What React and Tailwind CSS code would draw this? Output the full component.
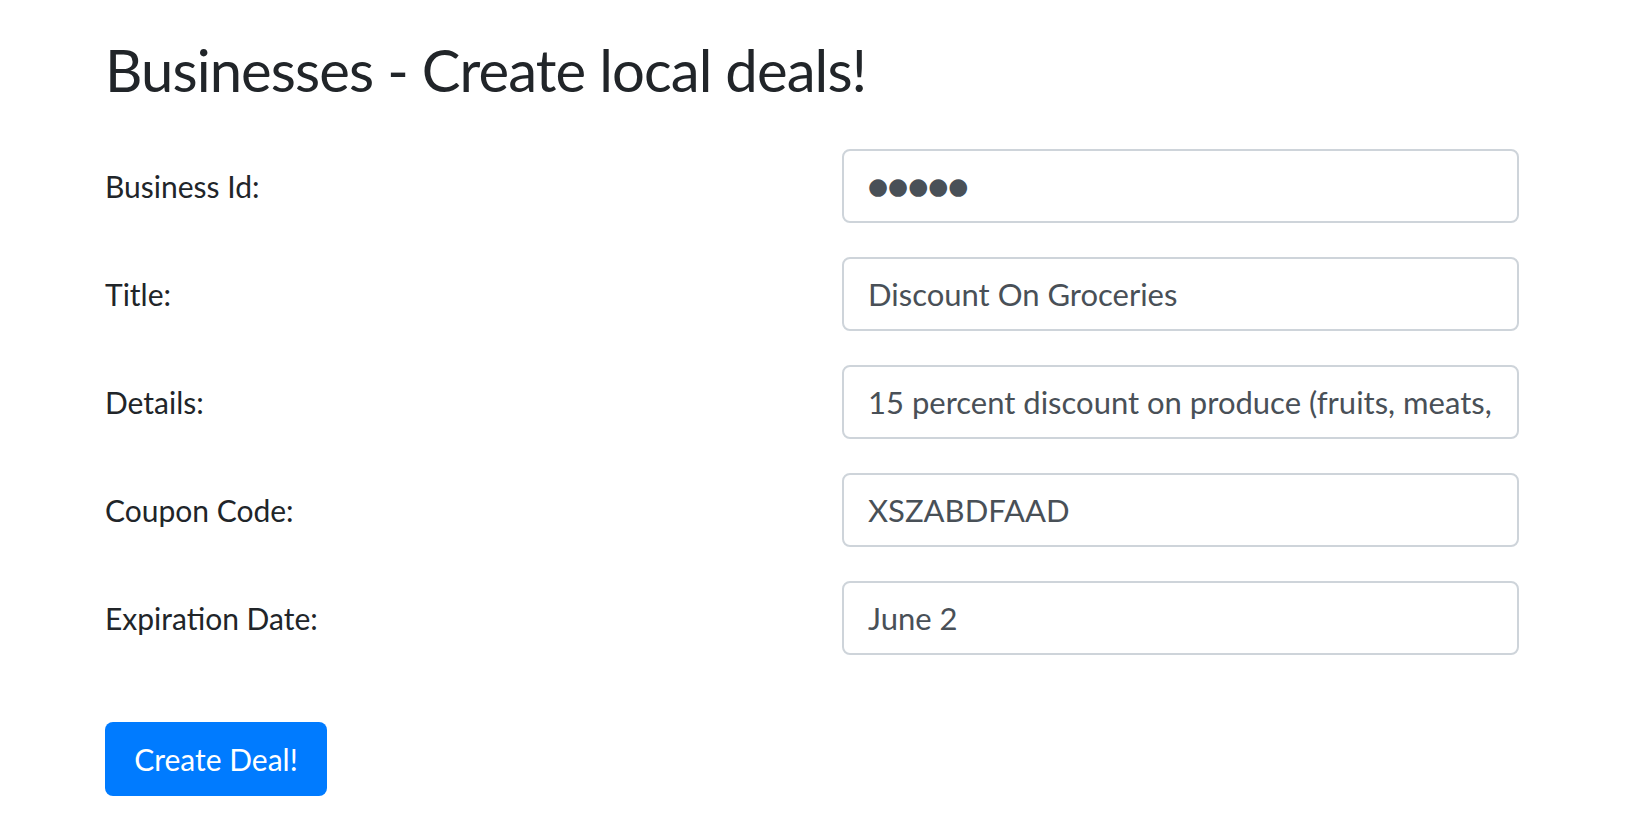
import React from 'react';

const fields = [
    { label: 'Business Id:', value: '●●●●●', masked: true },
    { label: 'Title:', value: 'Discount On Groceries' },
    { label: 'Details:', value: '15 percent discount on produce (fruits, meats, vegetables)' },
    { label: 'Coupon Code:', value: 'XSZABDFAAD' },
    { label: 'Expiration Date:', value: 'June 2' },
];

function App() {
    return (
        <div className="min-h-screen bg-white text-[#212529] font-['Lato',sans-serif]">
            <div className="pl-[105px] pt-[34px]">
                <h2 className="text-[58px] leading-[72px] tracking-[-0.9px] font-normal mb-[43px]">
                    Businesses - Create local deals!
                </h2>
                <form className="flex flex-col gap-[34px]">
                    {fields.map((f) => (
                        <div key={f.label} className="flex items-center">
                            <label className="w-[737px] text-[30px]">{f.label}</label>
                            <input
                                type="text"
                                value={f.value}
                                readOnly
                                className={
                                    'w-[677px] h-[74px] px-[24px] text-[#495057] border-2 border-[#ced4da] rounded-[8px] outline-none bg-white ' +
                                    (f.masked
                                        ? "text-[23px] font-['DejaVu_Sans',sans-serif]"
                                        : 'text-[31px]')
                                }
                            />
                        </div>
                    ))}
                    <div className="pt-[33px]">
                        <button
                            type="button"
                            className="h-[74px] w-[222px] bg-[#007bff] text-white text-[30px] rounded-[8px]"
                        >
                            Create Deal!
                        </button>
                    </div>
                </form>
            </div>
        </div>
    );
}

export default App;
